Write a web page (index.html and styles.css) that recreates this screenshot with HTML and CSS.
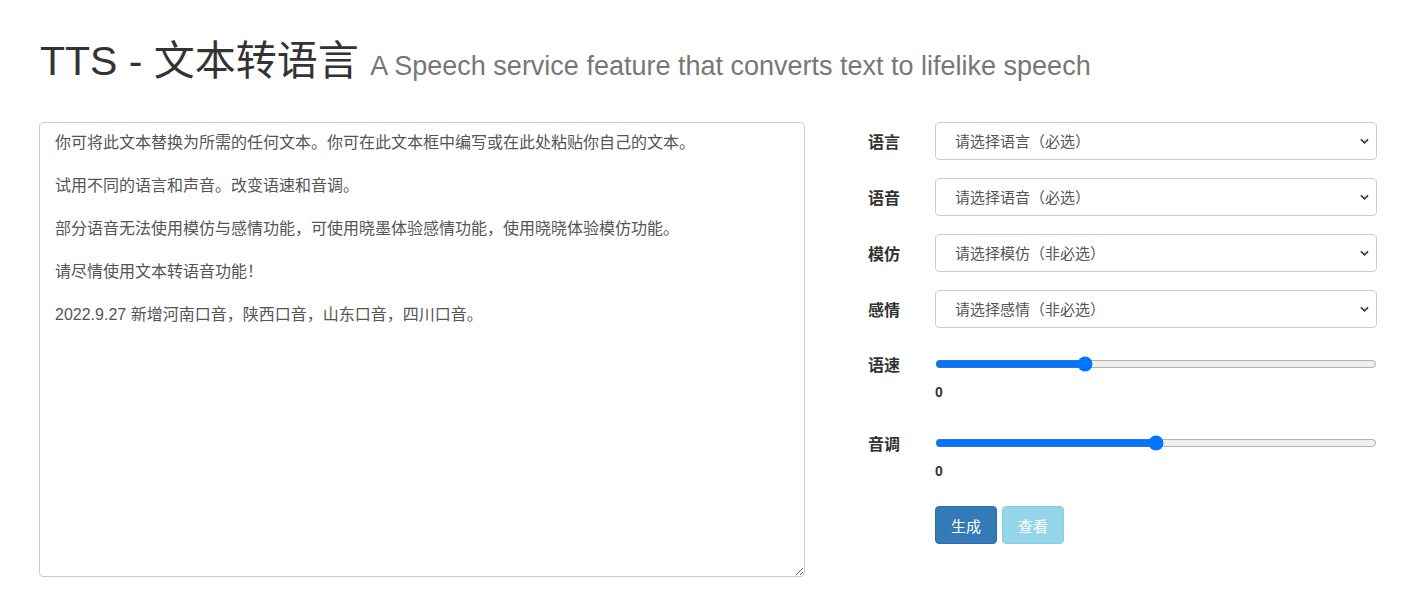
FILE: index.html
```html
<!DOCTYPE html>
<html lang="zh-CN">
<head>
    <meta charset="UTF-8">
    <meta name="viewport" content="width=device-width, initial-scale=1.0">
    <title>TTS - 文本转语言</title>
    <link rel="stylesheet" href="styles.css">
</head>
<body>
    <div class="page">
        <h1 class="title">TTS - 文本转语言 <small>A Speech service feature that converts text to lifelike speech</small></h1>

        <div class="main">
            <textarea id="tts-text" class="text-box">你可将此文本替换为所需的任何文本。你可在此文本框中编写或在此处粘贴你自己的文本。

试用不同的语言和声音。改变语速和音调。

部分语音无法使用模仿与感情功能，可使用晓墨体验感情功能，使用晓晓体验模仿功能。

请尽情使用文本转语音功能！

2022.9.27 新增河南口音，陕西口音，山东口音，四川口音。</textarea>

            <form class="options">
                <div class="form-group">
                    <label for="language">语言</label>
                    <div class="select-wrap">
                        <select id="language" class="form-control">
                            <option value="">请选择语言（必选）</option>
                        </select>
                        <svg class="chevron" viewBox="0 0 10 6"><path d="M1 1l4 4 4-4"/></svg>
                    </div>
                </div>
                <div class="form-group">
                    <label for="voice">语音</label>
                    <div class="select-wrap">
                        <select id="voice" class="form-control">
                            <option value="">请选择语音（必选）</option>
                        </select>
                        <svg class="chevron" viewBox="0 0 10 6"><path d="M1 1l4 4 4-4"/></svg>
                    </div>
                </div>
                <div class="form-group">
                    <label for="style">模仿</label>
                    <div class="select-wrap">
                        <select id="style" class="form-control">
                            <option value="">请选择模仿（非必选）</option>
                        </select>
                        <svg class="chevron" viewBox="0 0 10 6"><path d="M1 1l4 4 4-4"/></svg>
                    </div>
                </div>
                <div class="form-group">
                    <label for="emotion">感情</label>
                    <div class="select-wrap">
                        <select id="emotion" class="form-control">
                            <option value="">请选择感情（非必选）</option>
                        </select>
                        <svg class="chevron" viewBox="0 0 10 6"><path d="M1 1l4 4 4-4"/></svg>
                    </div>
                </div>
                <div class="form-group slider-group">
                    <label for="rate">语速</label>
                    <div>
                        <input type="range" id="rate" min="-50" max="100" value="0">
                        <div class="slider-value" id="rateValue">0</div>
                    </div>
                </div>
                <div class="form-group slider-group">
                    <label for="pitch">音调</label>
                    <div>
                        <input type="range" id="pitch" min="-100" max="100" value="0">
                        <div class="slider-value" id="pitchValue">0</div>
                    </div>
                </div>
                <div class="form-group">
                    <span></span>
                    <div class="buttons">
                        <button type="button" class="btn btn-primary" id="generateBtn">生成</button>
                        <button type="button" class="btn btn-info" id="viewBtn" disabled>查看</button>
                    </div>
                </div>
            </form>
        </div>
    </div>

    <script>
        const rate = document.getElementById('rate');
        const pitch = document.getElementById('pitch');
        const rateValue = document.getElementById('rateValue');
        const pitchValue = document.getElementById('pitchValue');

        rate.addEventListener('input', function() {
            rateValue.textContent = rate.value;
        });
        pitch.addEventListener('input', function() {
            pitchValue.textContent = pitch.value;
        });
    </script>
</body>
</html>
```

FILE: styles.css
```css
body {
    margin: 0;
    font-family: "Liberation Sans", "Noto Sans CJK SC", sans-serif;
    font-size: 14px;
    color: #333;
    background: #fff;
}

.page {
    padding: 0 46px 0 39px;
}

.title {
    margin: 39px 0 34px 1px;
    font-size: 41px;
    line-height: 44px;
    font-weight: 400;
    color: #333;
}

.title small {
    font-size: 27px;
    color: #777;
}

.main {
    display: flex;
    gap: 63px;
}

.text-box {
    box-sizing: border-box;
    width: 766px;
    height: 455px;
    padding: 9px 15px 7px;
    border: 1px solid #ccc;
    border-radius: 4px;
    font-family: "Liberation Sans", "Noto Sans CJK SC", sans-serif;
    font-size: 16px;
    line-height: 21.5px;
    color: #555;
    resize: both;
}

.options {
    width: 509px;
}

.form-group {
    display: grid;
    grid-template-columns: 67px 442px;
    align-items: center;
    margin-bottom: 18px;
}

.form-group label {
    font-weight: bold;
    font-size: 16px;
}

.select-wrap {
    position: relative;
}

.form-control {
    box-sizing: border-box;
    display: block;
    width: 100%;
    height: 38px;
    padding: 6px 30px 6px 19px;
    border: 1px solid #ccc;
    border-radius: 4px;
    background: #fff;
    font-family: "Liberation Sans", "Noto Sans CJK SC", sans-serif;
    font-size: 15px;
    color: #555;
    appearance: none;
}

.chevron {
    position: absolute;
    right: 8px;
    top: 16px;
    width: 9px;
    height: 6px;
    fill: none;
    stroke: #333;
    stroke-width: 1.8;
    pointer-events: none;
}

.slider-group {
    align-items: start;
}

.slider-group label {
    margin-top: 8px;
    line-height: 24px;
}

.slider-group input[type="range"] {
    display: block;
    width: 100%;
    height: 20px;
    margin: 8px 0 0;
}

.slider-value {
    margin: 8px 0 5px;
    line-height: 20px;
    font-weight: bold;
}

.buttons {
    display: flex;
    gap: 5px;
    margin-top: 2px;
}

.btn {
    height: 38px;
    padding: 0 15px;
    border: 1px solid transparent;
    border-radius: 4px;
    font-family: "Liberation Sans", "Noto Sans CJK SC", sans-serif;
    font-size: 15px;
    color: #fff;
    cursor: pointer;
}

.btn-primary {
    background-color: #337ab7;
    border-color: #2e6da4;
}

.btn-primary:hover {
    background-color: #286090;
}

.btn-info {
    background-color: #5bc0de;
    border-color: #46b8da;
}

.btn[disabled] {
    opacity: 0.65;
    cursor: not-allowed;
}
```
